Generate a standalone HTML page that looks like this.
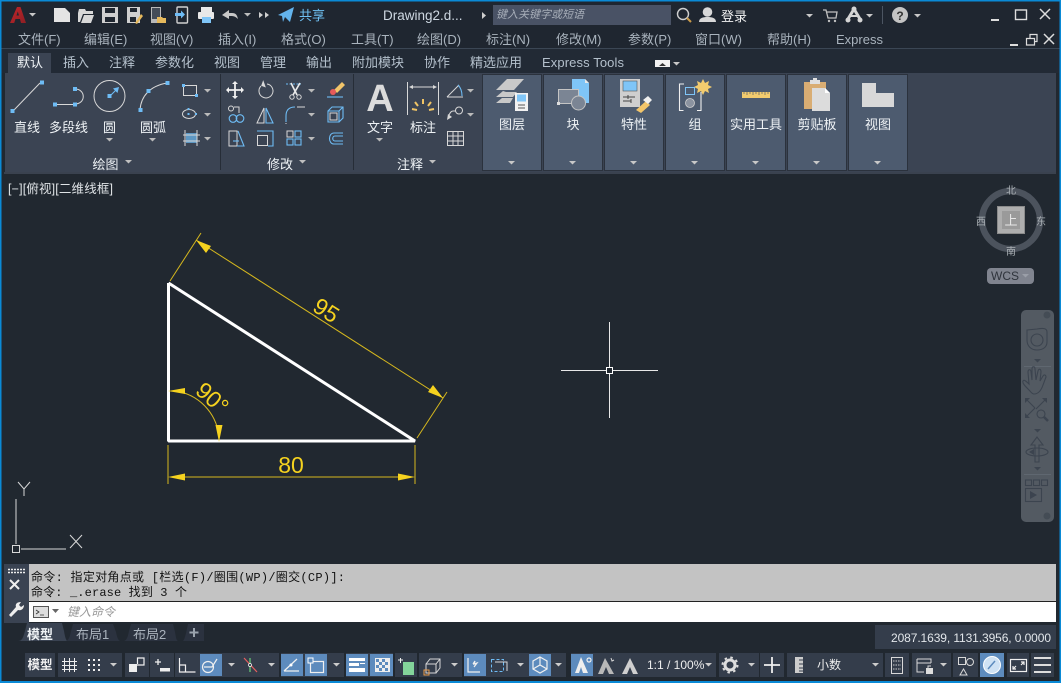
<!DOCTYPE html>
<html><head><meta charset="utf-8"><style>
html,body{margin:0;padding:0;background:#212830;overflow:hidden}
svg{display:block;position:absolute;left:0;top:0}
text{font-family:"Liberation Sans","Noto Sans CJK SC",sans-serif}
.m{font-size:13px;fill:#a9b3bd}
.t{font-size:13px;fill:#b4c0cc}
.l{font-size:13px;fill:#eef2f5;text-anchor:middle}
.mono{font-family:"Liberation Mono","Noto Sans CJK SC",monospace;font-size:12px;fill:#111}
.s{fill:none;stroke:#d8d8d8;stroke-width:1}
.b{fill:none;stroke:#6ebcf5;stroke-width:1.100}
.w{fill:none;stroke:#f0f0f0;stroke-width:1.200}
.d{fill:none;stroke:#3c444f;stroke-width:1.100}
.y{fill:none;stroke:#d6b81e;stroke-width:1}
.yf{fill:#f5d21f}
</style></head><body>
<svg width="1061" height="683" viewBox="0 0 1061 683" xmlns="http://www.w3.org/2000/svg">
<defs>
<path id="tri" d="M0 0h7l-3.500 3.500z"/>
<linearGradient id="ag" x1="0" y1="0" x2="1" y2="1"><stop offset="0" stop-color="#c5252a"/><stop offset="1" stop-color="#8c1f24"/></linearGradient>
</defs>
<rect width="1061" height="683" fill="#212830"/>
<!-- top area -->
<rect x="0" y="0" width="1061" height="48" fill="#1f2630"/>
<rect x="0" y="48" width="1061" height="1" fill="#3b4654"/>
<rect x="0" y="49" width="1061" height="24" fill="#222a35"/>
<rect x="8" y="53" width="43" height="20" fill="#3b4453"/>
<!-- A logo -->
<path d="M10 23L17 7h3.500L26 23h-5l-1-4h-4.500l-1.300 4zM16.500 15.500h2.500l-1.200-4z" fill="url(#ag)" fill-rule="evenodd"/>
<use href="#tri" x="29" y="13" fill="#c8c8c8"/>
<!-- QAT -->
<path d="M54 8h11l5 5v9H54z" fill="#e4e4e4"/>
<path d="M78 13l1-4h6l1 2h7v3H83l-3 8h-2zM81 23l3-8h10l-3 8z" fill="#d8d8d8"/>
<path d="M102 7h16v16h-16z" fill="#cfcfcf"/><rect x="105" y="8" width="10" height="5" fill="#1f2630"/><rect x="105" y="17" width="10" height="5" fill="#1f2630"/>
<path d="M127 7h13v16h-13z" fill="#cfcfcf"/><rect x="130" y="8" width="7" height="4" fill="#1f2630"/><rect x="130" y="17" width="6" height="5" fill="#1f2630"/><path d="M135 23l6-9 2 2-6 8z" fill="#e6b95c"/>
<rect x="151" y="7" width="10" height="16" fill="#b9b9b9"/><rect x="152" y="8" width="8" height="11" fill="#444c58"/><path d="M157 17h5l1 1h3v5h-9z" fill="#e6b95c"/>
<rect x="177" y="7" width="10.500" height="16" rx="1" fill="none" stroke="#d0d0d0" stroke-width="1.400"/><path d="M175 13h6v-2.500l4 4-4 4v-2.500h-6z" fill="#6ebcf5"/>
<rect x="201" y="7" width="11" height="5" fill="#e8e8e8"/><rect x="198" y="12" width="16" height="7" rx="1" fill="#e8e8e8"/><rect x="202" y="17" width="9" height="6" fill="#7fc5f7"/>
<path d="M222 15l7-5v3h3c4 0 5 2 6 6-2-2-4-3-6-3h-3v3z" fill="#c8c8c8"/>
<use href="#tri" x="244" y="13" fill="#bdbdbd"/>
<path d="M259 12l4 3-4 3zM265 12l4 3-4 3z" fill="#d0d0d0"/>
<path d="M278 15l16-8-4 15-5-5-2 5-1-6z" fill="#63b4ee"/>
<text x="299" y="20" font-size="13" fill="#6fc0f2">共享</text>
<text x="383" y="20" font-size="13.500" fill="#ced8e2">Drawing2.d...</text>
<path d="M482 12l4 3.500-4 3.500z" fill="#cfcfcf"/>
<rect x="493" y="5" width="178" height="20" fill="#495265"/>
<text x="496" y="18" font-size="11" font-style="italic" fill="#a6adb8">键入关键字或短语</text>
<circle cx="683" cy="14" r="5.500" fill="none" stroke="#d0d0d0" stroke-width="1.400"/><path d="M687 18l4 4" stroke="#c99a4a" stroke-width="2"/>
<circle cx="707.500" cy="12" r="4.800" fill="#d8d8d8"/><path d="M699 22c0-4 4-5 8.500-5s8.500 1 8.500 5z" fill="#d8d8d8"/>
<text x="721" y="21" font-size="13" fill="#f2f2f2">登录</text>
<use href="#tri" x="806" y="14" fill="#c8c8c8"/>
<path d="M823 10h3l2 8h8l1-6h-10" fill="none" stroke="#c0c0c0" stroke-width="1.300"/><circle cx="829" cy="21" r="1.200" fill="#c0c0c0"/><circle cx="835" cy="21" r="1.200" fill="#c0c0c0"/>
<path d="M854 9l-6 10M854 9l6 10" stroke="#d4d4d4" stroke-width="3" fill="none"/><path d="M850 16h8" stroke="#d4d4d4" stroke-width="2"/><circle cx="854" cy="9" r="2.500" fill="#d4d4d4"/><circle cx="848" cy="20" r="2.500" fill="#d4d4d4"/><circle cx="860" cy="20" r="2.500" fill="#d4d4d4"/>
<use href="#tri" x="866" y="14" fill="#c8c8c8"/>
<rect x="882" y="6" width="1" height="18" fill="#4c5562"/>
<circle cx="900" cy="15" r="8" fill="#c4c4c4"/><text x="900" y="20" font-size="12" font-weight="bold" fill="#333" text-anchor="middle">?</text>
<use href="#tri" x="914" y="14" fill="#c8c8c8"/>
<rect x="991" y="19" width="8" height="2" fill="#ddd"/>
<rect x="1015.500" y="10" width="11" height="9.500" fill="none" stroke="#ddd" stroke-width="1.400"/>
<path d="M1040 9l10 10M1050 9l-10 10" stroke="#ddd" stroke-width="1.500"/>
<!-- menu -->
<g class="m">
<text x="18" y="44">文件(F)</text><text x="84" y="44">编辑(E)</text><text x="150" y="44">视图(V)</text><text x="218" y="44">插入(I)</text><text x="281" y="44">格式(O)</text><text x="351" y="44">工具(T)</text><text x="417" y="44">绘图(D)</text><text x="486" y="44">标注(N)</text><text x="556" y="44">修改(M)</text><text x="628" y="44">参数(P)</text><text x="695" y="44">窗口(W)</text><text x="767" y="44">帮助(H)</text><text x="836" y="44">Express</text>
</g>
<rect x="1010" y="44" width="8" height="2" fill="#ddd"/>
<path d="M1026.500 38.500h8v6.500h-8zM1030 38v-3.500h7v7h-2.500" fill="none" stroke="#ddd" stroke-width="1.200"/>
<path d="M1044 34l10 10M1054 34l-10 10" stroke="#ddd" stroke-width="1.500"/>
<!-- tabs -->
<g class="t">
<text x="17" y="67" style="fill:#f0f4f7">默认</text><text x="63" y="67">插入</text><text x="109" y="67">注释</text><text x="155" y="67">参数化</text><text x="214" y="67">视图</text><text x="260" y="67">管理</text><text x="306" y="67">输出</text><text x="352" y="67">附加模块</text><text x="424" y="67">协作</text><text x="470" y="67">精选应用</text><text x="542" y="67" textLength="82">Express Tools</text>
</g>
<rect x="655" y="60" width="15" height="7" fill="#f2f2f2"/><path d="M659 66l3.500-3 3.500 3z" fill="#333"/>
<use href="#tri" x="673" y="62" fill="#c8c8c8"/>
<!-- ribbon -->
<rect x="5" y="73" width="1051" height="99" fill="#3b4453"/>
<rect x="4" y="172" width="1052" height="2" fill="#3a424f"/>
<rect x="220" y="74" width="1" height="96" fill="#262d37"/>
<rect x="353" y="74" width="1" height="96" fill="#262d37"/>
<g fill="#4d5b6f" stroke="#2b323d">
<rect x="482.500" y="74.500" width="59" height="96"/><rect x="543.500" y="74.500" width="59" height="96"/><rect x="604.500" y="74.500" width="59" height="96"/><rect x="665.500" y="74.500" width="59" height="96"/><rect x="726.500" y="74.500" width="59" height="96"/><rect x="787.500" y="74.500" width="59" height="96"/><rect x="848.500" y="74.500" width="59" height="96"/>
</g>
<!-- draw icons -->
<path d="M14 110L40 83" class="s"/>
<rect x="10.500" y="109" width="4" height="4" fill="#6ebcf5"/><rect x="40" y="80.500" width="4" height="4" fill="#6ebcf5"/>
<path d="M56 104.500H73M75 89c11 0 11 15 0 15" class="s"/><rect x="53" y="102.500" width="4" height="4" fill="#6ebcf5"/><rect x="73" y="102.500" width="4" height="4" fill="#6ebcf5"/><rect x="73" y="87" width="4" height="4" fill="#6ebcf5"/>
<circle cx="109.500" cy="96" r="15.500" class="s"/><rect x="107.500" y="94" width="4" height="4" fill="#6ebcf5"/><path d="M111 95l7-7" class="b"/><path d="M119 87l-6 1.500 4.500 4.500z" fill="#6ebcf5"/>
<path d="M140 110c1-14 10-24 27-27" class="s"/><rect x="138.500" y="108" width="4" height="4" fill="#6ebcf5"/><rect x="165.500" y="81" width="4" height="4" fill="#6ebcf5"/><rect x="146.500" y="89" width="4" height="4" fill="#6ebcf5"/>
<rect x="183.500" y="85.500" width="13" height="10" class="s"/><rect x="182" y="84" width="3" height="3" fill="#6ebcf5"/><rect x="195" y="94" width="3" height="3" fill="#6ebcf5"/>
<use href="#tri" x="204" y="89" fill="#bbb"/>
<ellipse cx="189" cy="114" rx="6.500" ry="4.500" class="s"/><rect x="187.500" y="113" width="2" height="2" fill="#6ebcf5"/><rect x="187.500" y="108" width="2" height="2" fill="#6ebcf5"/><rect x="195" y="113" width="2" height="2" fill="#6ebcf5"/>
<use href="#tri" x="204" y="113" fill="#bbb"/>
<rect x="186" y="133" width="11" height="10" fill="#6ebcf5" fill-opacity=".7"/><path d="M183 135h17M183 141h17M185 130v16M197 130v16" class="s"/>
<use href="#tri" x="204" y="137" fill="#bbb"/>
<g class="l"><text x="27" y="132">直线</text><text x="68.500" y="132">多段线</text><text x="109.500" y="132">圆</text><text x="153" y="132">圆弧</text><text x="105.500" y="169">绘图</text><text x="280" y="169">修改</text><text x="410" y="169">注释</text><text x="380" y="132">文字</text><text x="423" y="132">标注</text></g>
<use href="#tri" x="106" y="138" fill="#bbb"/><use href="#tri" x="149" y="138" fill="#bbb"/>
<use href="#tri" x="125" y="160" fill="#c0c0c0"/><use href="#tri" x="299" y="160" fill="#c0c0c0"/><use href="#tri" x="429" y="160" fill="#c0c0c0"/>
<!-- modify icons -->
<path d="M235 83v14M228 90h15" stroke="#f0f0f0" stroke-width="1.800"/><path d="M235 81l3 3h-6zM235 99l3-3h-6zM226 90l3-3v6zM244 90l-3-3v6z" fill="#f0f0f0"/>
<path d="M267 84a7 7 0 1 1-6 2" class="s" stroke-width="1.300"/><path d="M262 81v6h5z" fill="#d8d8d8" transform="rotate(20 265 84)"/>
<path d="M286 84h15" stroke="#6ebcf5" stroke-width="1" stroke-dasharray="2 1.500"/><path d="M291 83l6 12M300 83l-7 12" stroke="#e8e8e8" stroke-width="1.700"/><circle cx="292" cy="97" r="2.200" class="s"/><circle cx="299" cy="97" r="2.200" class="s"/>
<use href="#tri" x="308" y="89" fill="#bbb"/>
<path d="M334 90l8-8 3 3-8 8z" fill="#f2c56a"/><circle cx="333" cy="92" r="3" fill="#e65a5a"/><path d="M327 97h16" class="b"/>
<path d="M234 107h5v6" class="s"/><rect x="228.500" y="106" width="5" height="5" rx="2.500" class="s"/><circle cx="233" cy="118.500" r="3.800" class="b"/><circle cx="240" cy="118.500" r="3.800" class="b"/>
<path d="M264 108v15h-7z" class="s"/><path d="M266 108v15h7z" class="b"/>
<path d="M286 122v-6c0-6 3-9 9-9" class="b"/><path d="M286 124v-1M297 107h8" class="s"/>
<use href="#tri" x="308" y="113" fill="#bbb"/>
<path d="M328 111h11v11h-11zM328 111l4-4h11v11l-4 4M339 111l4-4" class="b"/><rect x="330" y="113" width="7" height="7" class="s"/>
<path d="M229 131h8v15h-8z" class="s"/><path d="M233 141h6" class="b"/><path d="M237 146h7l-6-15" class="b"/>
<rect x="257.500" y="135.500" width="10" height="10" class="s"/><path d="M257 131h16v15h-5" class="b"/>
<rect x="287" y="131" width="6" height="6" class="s"/><rect x="295" y="131" width="6" height="6" class="b"/><rect x="287" y="139" width="6" height="6" class="b"/><rect x="295" y="139" width="6" height="6" class="b"/>
<use href="#tri" x="308" y="137" fill="#bbb"/>
<path d="M343 133h-9c-6 0-6 11 0 11h9M343 136h-8c-3 0-3 5 0 5h8" class="b"/>
<!-- annotation -->
<text x="380" y="111" font-size="38" font-weight="bold" fill="#dcdcdc" text-anchor="middle">A</text>
<use href="#tri" x="376" y="138" fill="#bbb"/>
<path d="M407.500 82v33M438.500 82v33M410 87h26" class="s"/><path d="M409 87l4-2v4zM437 87l-4-2v4z" fill="#d8d8d8"/>
<path d="M423 99v5M415 102l3 4M431 102l-3 4M412 109l5 1M434 109l-5 1" stroke="#f0c465" stroke-width="2"/>
<path d="M447 97l12-12M447 97h16" class="s"/><path d="M458 85c3 3 4 7 4 11" class="b"/>
<use href="#tri" x="467" y="89" fill="#bbb"/>
<circle cx="459" cy="110.500" r="3.500" class="s"/><path d="M456 111h-3c-2 0-3 2-4 4" class="s"/><path d="M447 120l1-6 4 3z" fill="#d8d8d8"/>
<use href="#tri" x="467" y="113" fill="#bbb"/>
<rect x="447.500" y="131.500" width="16" height="14" class="s"/><path d="M447 136h16M447 141h16M453 132v14M458 132v14" class="s"/>
<!-- big buttons -->
<path d="M496 90l11-11h17l-10 11zM496 97l7-6 3 1h11l-4 5zM496 103l6-5h11l-3 5z" fill="#c9c9c9"/>
<rect x="515" y="93" width="13" height="18" fill="#f2f2f2"/><rect x="517" y="94.500" width="9" height="7" fill="#7fc5f7"/><path d="M518 105h7M518 108h7" stroke="#555" stroke-width="1"/>
<path d="M572 79h13l4 4v20h-17z" fill="#7fc5f7"/><path d="M585 79l4 4h-4z" fill="#e8e8e8"/>
<rect x="558.500" y="89.500" width="20" height="14" fill="#7b8594" stroke="#c4c4c4"/><circle cx="578.500" cy="103" r="7" fill="#7b8594" stroke="#c4c4c4"/><rect x="557" y="102" width="3" height="3" fill="#ddd"/>
<rect x="620" y="79" width="20" height="28" fill="#cfcfcf"/><rect x="623" y="81" width="14" height="10" fill="#7fc5f7" stroke="#555" stroke-width=".6"/><path d="M623 97h12M623 101h8M628 95v4M631 99v4" stroke="#444" stroke-width="1"/><path d="M636 110l10-9 4 4-9 8z" fill="#f2c56a"/><path d="M643 100l5-4 4 4-4 4z" fill="#f0f0f0"/>
<path d="M684 84h-4.500v26.500h4M697 110.500h4V92" stroke="#f0f0f0" stroke-width="1.100" fill="none"/><rect x="685.500" y="87.500" width="9" height="7" fill="none" stroke="#7fc5f7" stroke-width="1"/><circle cx="690" cy="103" r="4.500" fill="#8b93a0" stroke="#d0d0d0" stroke-width=".8"/>
<path d="M703 79l2 4 4-2-1 4 4 2-4 2 1 4-4-2-2 4-2-4-4 2 1-4-4-2 4-2-1-4 4 2z" fill="#f2cb6e"/>
<rect x="742" y="92" width="28" height="6" fill="#f2cb6e"/><path d="M744 92v2M747 92v3M750 92v2M753 92v3M756 92v2M759 92v3M762 92v2M765 92v3M768 92v2" stroke="#5a5f66" stroke-width=".7"/>
<rect x="804" y="82" width="22" height="27" fill="#d9ad73"/><rect x="810" y="80" width="10" height="4" fill="#e0e0e0"/><rect x="813" y="78" width="4" height="3" fill="#e0e0e0"/>
<path d="M812 88h13l5 5v18h-18z" fill="#dcdcdc"/><path d="M825 88l5 5h-5z" fill="#fff"/>
<path d="M862 83h14v10h18v14h-32z" fill="#d8d8d8"/>
<g class="l"><text x="512" y="129">图层</text><text x="573" y="129">块</text><text x="634" y="129">特性</text><text x="695" y="129">组</text><text x="756" y="129">实用工具</text><text x="817" y="129">剪贴板</text><text x="878" y="129">视图</text></g>
<g fill="#c8c8c8"><use href="#tri" x="508" y="161"/><use href="#tri" x="569" y="161"/><use href="#tri" x="630" y="161"/><use href="#tri" x="691" y="161"/><use href="#tri" x="752" y="161"/><use href="#tri" x="813" y="161"/><use href="#tri" x="874" y="161"/></g>
<!-- viewport label -->
<text x="8" y="193" font-size="12.500" fill="#dfe3e6" textLength="105">[−][俯视][二维线框]</text>
<!-- drawing -->
<path d="M168.500 283V441H415L168.500 283" fill="none" stroke="#fff" stroke-width="3" stroke-linejoin="bevel"/>
<path d="M170 281L201 233M417 438L447 392M196 240L443 398M168 445V484M415 445V484M174 477H410M175 391C198 394 216 412 219 436" class="y"/>
<path d="M196 240L211 246 206 253zM443 398L428 392 433 385zM168 477l17-3.500v7zM415 477l-17-3.500v7zM168 391l17-3v6zM219 442l-3.500-17h7z" class="yf"/>
<text x="291" y="473" font-size="23" fill="#f5d21f" text-anchor="middle">80</text>
<text x="0" y="0" font-size="23" fill="#f5d21f" text-anchor="middle" transform="translate(322 317) rotate(32.600)">95</text>
<text x="0" y="0" font-size="23" fill="#f5d21f" text-anchor="middle" transform="translate(207 404) rotate(42)">90°</text>
<!-- crosshair -->
<path d="M561 370.500H658M609.500 322V418" stroke="#e8e8e8" stroke-width="1"/>
<rect x="606.500" y="367.500" width="6" height="6" fill="#212830" stroke="#fff"/>
<!-- UCS -->
<path d="M16 499V544M21 549H66" stroke="#d8d8d8" stroke-width="1"/><rect x="12.500" y="545.500" width="7" height="7" fill="none" stroke="#d8d8d8"/>
<path d="M18 482l6 7 6-7M24 489v7" stroke="#d8d8d8" fill="none"/>
<path d="M70 535l12 13M82 535l-12 13" stroke="#d8d8d8"/>
<!-- viewcube -->
<circle cx="1011" cy="220" r="29" fill="none" stroke="#4c535d" stroke-width="6.500"/>
<rect x="997.500" y="206.500" width="27" height="27" fill="#aeaeae" stroke="#8b8b8b"/><rect x="1002" y="211" width="18" height="18" fill="#9a9a9a"/>
<text x="1011" y="225" font-size="13" fill="#e8e8e8" text-anchor="middle">上</text>
<g font-size="10" fill="#aab0b5" text-anchor="middle"><text x="1011" y="194">北</text><text x="1011" y="255">南</text><text x="981" y="225">西</text><text x="1041" y="225">东</text></g>
<rect x="987" y="268" width="47" height="16" rx="4" fill="#80848f"/><text x="991" y="280" font-size="12" fill="#2f343c">WCS</text><path d="M1022 274h7l-3.500 3.500z" fill="#9a9ea8"/>
<!-- nav bar -->
<rect x="1021" y="310" width="33" height="212" rx="5" fill="#535a62"/>
<circle cx="1047" cy="315" r="3.500" fill="#444c55"/><circle cx="1047" cy="516" r="3.500" fill="#444c55"/>
<path d="M1027 330l10-1c6-1 10-1 10 3v10c0 5-4 8-10 8-6 0-10-4-10-10z" class="d"/><circle cx="1037" cy="340" r="6" class="d"/>
<use href="#tri" x="1034" y="359" fill="#3c444f"/>
<rect x="1024" y="366" width="27" height="1" fill="#5f6770"/>
<path d="M1029 390c-4-4-7-7-6-9s4 1 6 3l-1-12c0-3 3-3 3 0l1 8 0-11c0-3 3-3 3 0l1 11 2-9c1-3 3-2 3 1l-1 9 3-5c1-2 3-1 3 1l-3 8c-2 6-5 9-9 9-2 0-3-2-5-4z" class="d"/>
<path d="M1027 400l8 8M1045 400l-9 9M1027 416l8-8" class="d" stroke-width="1.400"/><path d="M1025 398h5l-5 5zM1047 398h-5l5 5zM1025 418h5l-5-5z" fill="#3c444f"/><circle cx="1041" cy="414" r="4" class="d"/><path d="M1044 417l4 4" stroke="#3c444f" stroke-width="2.500"/>
<use href="#tri" x="1034" y="429" fill="#3c444f"/>
<path d="M1037 437l-6 8h4v17h4v-17h4z" class="d"/><ellipse cx="1037" cy="452" rx="11" ry="4" class="d"/><path d="M1029 452l5-3v6z" fill="#3c444f"/>
<use href="#tri" x="1034" y="467" fill="#3c444f"/>
<rect x="1024" y="474" width="27" height="1" fill="#5f6770"/>
<rect x="1025.500" y="480" width="6" height="5.500" class="d"/><rect x="1033.500" y="480" width="6" height="5.500" class="d"/><rect x="1041.500" y="480" width="6" height="5.500" class="d"/><rect x="1025.500" y="488.500" width="16" height="13" class="d"/><path d="M1030 491v8l7-4z" fill="#3c444f"/>
<!-- command -->
<rect x="4" y="564" width="25" height="59" fill="#3a4352"/>
<path d="M8 569.500h17M8 572.500h17" stroke="#eee" stroke-width="1.500" stroke-dasharray="2 1"/>
<path d="M10 580l9 9M19 580l-9 9" stroke="#eee" stroke-width="2"/>
<path d="M9 615l7-8c-1-3 1-5 5-5l-2 3 2 2 3-2c0 3-2 6-6 5l-7 7z" fill="#eee"/>
<rect x="29" y="564" width="1027" height="37" fill="#c3c3c3"/>
<rect x="29" y="601" width="1027" height="1" fill="#222"/>
<rect x="29" y="602" width="1027" height="20" fill="#fff"/>
<text x="31" y="581" class="mono" textLength="314">命令: 指定对角点或 [栏选(F)/圈围(WP)/圈交(CP)]:</text>
<text x="31" y="596" class="mono" textLength="156">命令: _.erase 找到 3 个</text>
<rect x="33.500" y="606.500" width="15" height="11" fill="#ddd" stroke="#555"/><path d="M36 610l3 2-3 2M40 615h4" stroke="#333" fill="none" stroke-width=".8"/><path d="M52 609h7l-3.500 4z" fill="#666"/>
<text x="67" y="616" font-size="12" font-style="italic" fill="#999">键入命令</text>
<!-- layout tabs -->
<path d="M18 641c4 0 5-3 7-10l2-8h35l2 8c1 6 2 10 4 10z" fill="#3a4352"/>
<path d="M66 641c3-1 4-5 5-10l2-7h40l3 8c1 5 2 8 4 9zM124 641c3-1 4-5 5-10l2-7h42l2 8c1 5 1 8 3 9zM183 641c2-2 3-8 5-17h16v17z" fill="#2b323f"/>
<text x="27" y="639" font-size="13" font-weight="bold" fill="#eef2f5">模型</text>
<text x="76" y="639" font-size="13" fill="#aab3bd">布局1</text>
<text x="133" y="639" font-size="13" fill="#aab3bd">布局2</text>
<path d="M194 628v9M189.500 632.500h9" stroke="#9aa3ad" stroke-width="2"/>
<!-- coords -->
<rect x="875" y="625" width="181" height="24" fill="#343d4b"/>
<text x="891" y="642" font-size="12" fill="#e2e6ea" textLength="160">2087.1639, 1131.3956, 0.0000</text>
<!-- status bar -->
<g fill="#343d4b">
<rect x="25" y="653" width="30" height="24"/><rect x="58" y="653" width="64" height="24"/><rect x="125" y="653" width="24" height="24"/><rect x="150" y="653" width="24" height="24"/><rect x="175" y="653" width="104" height="24"/><rect x="281" y="653" width="63" height="24"/><rect x="346" y="653" width="47" height="24"/><rect x="395" y="653" width="22" height="24"/><rect x="419" y="653" width="43" height="24"/><rect x="464" y="653" width="102" height="24"/><rect x="571" y="653" width="145" height="24"/><rect x="719" y="653" width="40" height="24"/><rect x="760" y="653" width="24" height="24"/><rect x="787" y="653" width="96" height="24"/><rect x="885" y="653" width="24" height="24"/><rect x="912" y="653" width="39" height="24"/><rect x="953" y="653" width="25" height="24"/><rect x="1007" y="653" width="22" height="24"/><rect x="1031" y="653" width="23" height="24"/>
</g>
<g fill="#5d8bbd">
<rect x="200" y="654" width="22" height="22"/><rect x="281" y="654" width="22" height="22"/><rect x="305" y="654" width="22" height="22"/><rect x="346" y="654" width="22" height="22"/><rect x="370" y="654" width="23" height="22"/><rect x="464" y="654" width="22" height="22"/><rect x="529" y="654" width="22" height="22"/><rect x="571" y="654" width="22" height="22"/><rect x="980" y="653" width="24" height="24"/>
</g>
<text x="40" y="669" font-size="12.500" font-weight="bold" fill="#f0f0f0" text-anchor="middle">模型</text>
<path d="M64.500 658v14M69.500 658v14M74.500 658v14M62 661.500h15M62 665.500h15M62 669.500h15" stroke="#eee" stroke-width="1"/>
<path d="M88 660h12M88 665h12M88 670h12" stroke="#eee" stroke-width="2" stroke-dasharray="2 3"/>
<use href="#tri" x="110" y="663" fill="#ccc"/>
<rect x="129" y="664" width="8" height="8" fill="#eee"/><path d="M137.500 664v-6h6.500v7h-7" class="w"/>
<path d="M158 659v6M155 662h6" stroke="#eee" stroke-width="1.300"/><rect x="160" y="668" width="10" height="3.500" fill="#eee"/>
<path d="M179.500 658v14h16M179.500 665h6v7" class="w"/>
<circle cx="208" cy="667" r="5.500" class="w"/><path d="M204 667h8l5-8" class="w"/>
<use href="#tri" x="228" y="663" fill="#ccc"/>
<path d="M244 658l13 14" stroke="#e66060" stroke-width="1.200"/><path d="M250 658v14" stroke="#69d07a" stroke-width="1.200"/><circle cx="250" cy="665" r="1.500" fill="#343d4b" stroke="#fff" stroke-width=".7"/>
<use href="#tri" x="268" y="663" fill="#ccc"/>
<path d="M284 671h15M284 671l13-12" class="w"/>
<circle cx="291" cy="665" r="1.500" fill="#fff"/>
<rect x="310.500" y="661.500" width="13" height="11" class="w"/><rect x="308" y="658" width="5" height="5" fill="#5d8bbd" stroke="#fff"/>
<use href="#tri" x="333" y="663" fill="#ccc"/>
<path d="M349 658h16v3h-16zM349 663h10v3h-10zM349 668h16v4h-16zM360 663h5v1h-5z" fill="#fff"/>
<rect x="375" y="658" width="15" height="14" fill="#eee"/><path d="M376 659h3v3h-3zM382 659h3v3h-3zM379 662h3v3h-3zM385 662h3v3h-3zM376 665h3v3h-3zM382 665h3v3h-3zM379 668h3v3h-3zM385 668h3v3h-3z" fill="#5d8bbd"/>
<path d="M398 660h5M400.500 658v5" stroke="#eee"/><rect x="403" y="662" width="11" height="13" fill="#83d49a"/>
<path d="M426 664h10v9h-10zM426 664l4-5h10v9l-4 5M436 664l4-5" class="s"/><rect x="424" y="670" width="5" height="5" fill="none" stroke="#e89a4a"/>
<use href="#tri" x="451" y="663" fill="#ccc"/>
<path d="M468 658v14h12M473 664l2-3-1 3 3-1-3 4" class="w"/>
<rect x="491.500" y="659.500" width="12" height="12" fill="none" stroke="#6ebcf5" stroke-dasharray="3 2"/><path d="M495 662h12v9" class="s"/>
<use href="#tri" x="517" y="663" fill="#ccc"/>
<path d="M540 657l7 4v8l-7 4-7-4v-8z" class="w"/><path d="M533 669l7-4 7 4M540 657v8" class="w"/>
<use href="#tri" x="555" y="663" fill="#ccc"/>
<path d="M581 657l-6 16h4l2-6 2 6h5z" fill="#eee"/><circle cx="589" cy="660" r="2" class="w"/>
<path d="M605 658l-7 16h5l3-7 3 7h5z" fill="#b8b8b8"/><path d="M611 658l1 3 2-1" class="s"/>
<path d="M630 658l-8 16h5l3-7 3 7h5z" fill="#cfcfcf"/>
<text x="647" y="669" font-size="12" fill="#eee">1:1 / 100%</text>
<use href="#tri" x="705" y="663" fill="#ccc"/>
<circle cx="730" cy="665" r="5" fill="none" stroke="#ddd" stroke-width="3"/><circle cx="730" cy="665" r="7.500" fill="none" stroke="#ddd" stroke-width="2" stroke-dasharray="2.500 3.400"/>
<use href="#tri" x="748" y="663" fill="#ccc"/>
<path d="M772 657v16M764 665h16" stroke="#eee" stroke-width="1.800"/>
<rect x="795" y="657" width="8" height="16" fill="#ccc"/><path d="M799 660h4M799 664h4M799 668h4M799 671h4" stroke="#343d4b"/>
<text x="817" y="669" font-size="12" fill="#eee">小数</text>
<use href="#tri" x="872" y="663" fill="#ccc"/>
<rect x="891.500" y="657.500" width="11" height="16" class="s"/><path d="M893 661h8M893 665h8M893 669h8" stroke="#ccc" stroke-dasharray="1.500 1"/>
<path d="M917 659h14v4M917 659v13h7M917 663h14" class="s"/><rect x="926" y="668" width="7" height="6" fill="#ddd"/><path d="M928 668v-2h3" class="s"/>
<use href="#tri" x="940" y="663" fill="#ccc"/>
<rect x="958.500" y="657.500" width="7" height="7" class="s"/><circle cx="970" cy="662" r="3.500" class="s"/><path d="M960 675l3.500-6 3.500 6z" class="s"/>
<circle cx="992" cy="665" r="8.500" fill="#cfe2f4" stroke="#fff"/><path d="M988 669l7-8" stroke="#5d8bbd" stroke-width="1.500"/>
<rect x="1010.500" y="659.500" width="16" height="12" class="w"/><path d="M1013 669l3-3M1024 662l-3 3M1013 666v3h3M1024 665v-3h-3" class="w"/>
<path d="M1034 658h17M1034 665h17M1034 672h17" stroke="#ddd" stroke-width="2"/>
<!-- blue window border -->
<rect x="0" y="0" width="1061" height="1.500" fill="#0a8ad6"/>
<rect x="0" y="0" width="1.500" height="683" fill="#0a8ad6"/>
<rect x="1059.500" y="0" width="1.500" height="683" fill="#0a8ad6"/>
<rect x="0" y="681" width="1061" height="2" fill="#0a8ad6"/>
</svg>
</body></html>
